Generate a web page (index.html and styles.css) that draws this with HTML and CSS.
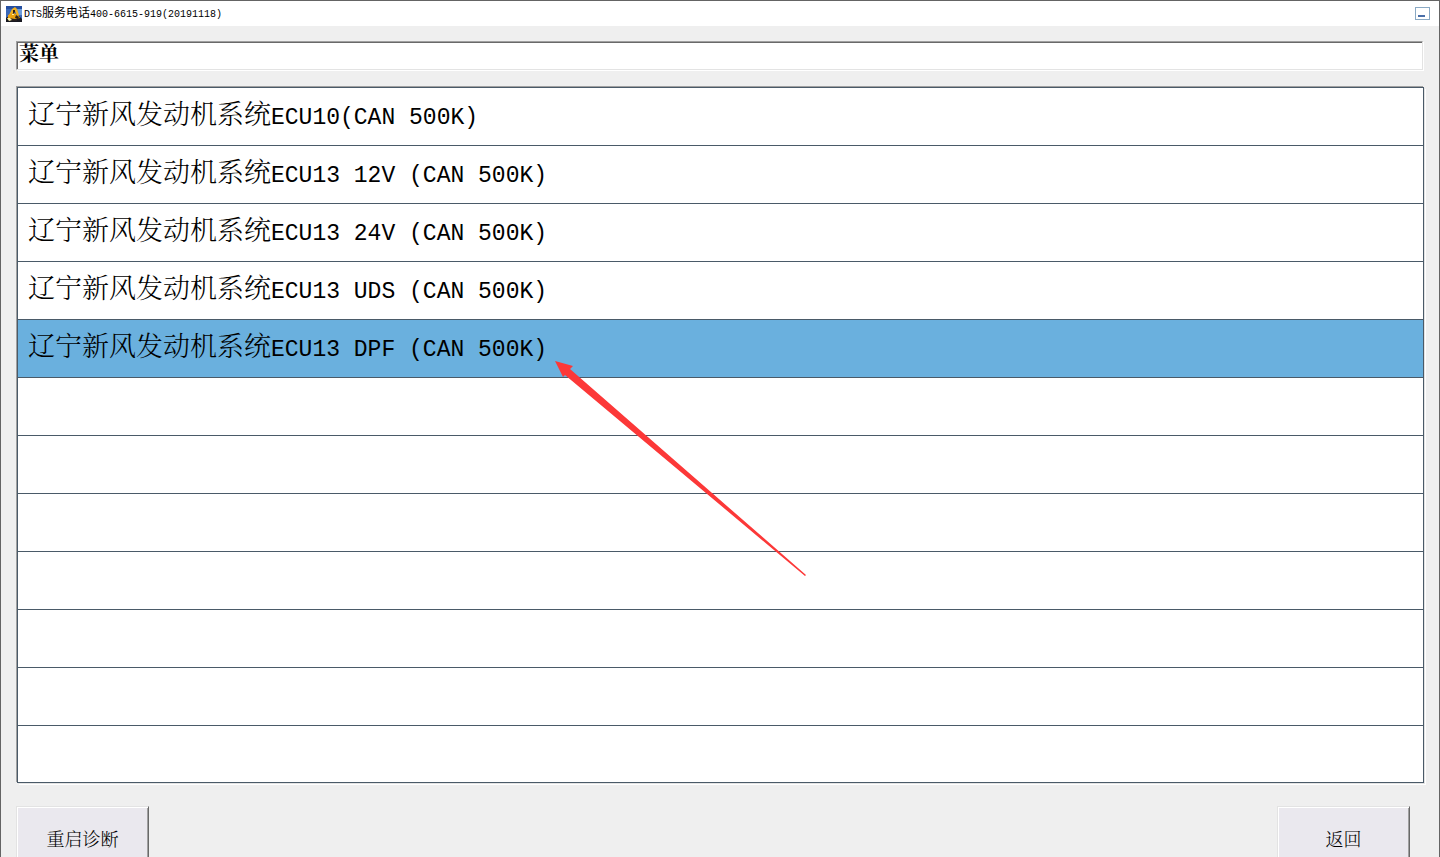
FILE: index.html
```html
<!DOCTYPE html>
<html lang="zh-CN">
<head>
<meta charset="utf-8">
<title>DTS服务电话400-6615-919(20191118)</title>
<link rel="stylesheet" href="styles.css">
</head>
<body>
<div class="window">
  <header class="titlebar">
    <svg class="app-icon" viewBox="0 0 16 16" aria-hidden="true">
      <rect width="16" height="16" fill="#3a68b8"/>
      <path d="M0 0h16v3H0z" fill="#244ea0"/>
      <path d="M11 3h5v6h-4z" fill="#6c9cdc"/>
      <path d="M0 12l3-2h10l3 3v3H0z" fill="#181820"/>
      <path d="M6 3l3-2 2 2 2 6-2 1-2-5-3 3-2 3-2 0 2-4z" fill="#f0b020"/>
      <path d="M2 9l6-2 4 2 2 3-5 1-7-1z" fill="#e8a010"/>
      <path d="M7 4l2 0 0 2-2 2zM10 9l3 2-1 2-3-1z" fill="#302010"/>
      <path d="M1 12h3l2 2-3 1zM6 8h2v1H6z" fill="#fff0a0"/>
      <path d="M6 13h5v2H6z" fill="#282020"/>
    </svg>
    <span class="title"><span class="latin">DTS</span>服务电话<span class="latin">400-6615-919(20191118)</span></span>
    <button class="minimize" type="button" aria-label="最小化"></button>
  </header>
  <main class="content">
    <h1 class="path">菜单</h1>
    <ul class="menu">
      <li><button class="row" type="button">辽宁新风发动机系统<span class="latin">ECU10(CAN 500K)</span></button></li>
      <li><button class="row" type="button">辽宁新风发动机系统<span class="latin">ECU13 12V (CAN 500K)</span></button></li>
      <li><button class="row" type="button">辽宁新风发动机系统<span class="latin">ECU13 24V (CAN 500K)</span></button></li>
      <li><button class="row" type="button">辽宁新风发动机系统<span class="latin">ECU13 UDS (CAN 500K)</span></button></li>
      <li class="selected"><button class="row" type="button" aria-current="true">辽宁新风发动机系统<span class="latin">ECU13 DPF (CAN 500K)</span></button>
        <svg class="arrow" viewBox="0 0 252 216" aria-hidden="true"><path d="M0 0L18 5L15 8L251 214L250 215L10 14L8 16Z" fill="#fc3838"/></svg>
      </li>
      <li></li>
      <li></li>
      <li></li>
      <li></li>
      <li></li>
      <li></li>
      <li></li>
    </ul>
    <footer class="actions">
      <button class="action" type="button">重启诊断</button>
      <button class="action" type="button">返回</button>
    </footer>
  </main>
</div>
</body>
</html>
```
FILE: styles.css
```css
* { box-sizing: border-box; }

body {
  margin: 0;
  height: 100vh;
  overflow: hidden;
  background: #efefef;
  color: #000;
  font-family: "Noto Serif CJK SC", "Noto Sans CJK SC", sans-serif;
}

button {
  font-family: inherit;
  color: inherit;
}

.latin { font-family: "Liberation Mono", monospace; }

.window {
  min-height: 100vh;
  border: 1px solid #646464;
  border-bottom: 0;
}

.titlebar {
  display: flex;
  align-items: center;
  gap: 2px;
  height: 25px;
  padding: 0 9px 0 5px;
  background: #fff;
}

.app-icon {
  width: 16px;
  height: 16px;
}

.title {
  font-family: "Noto Sans CJK SC", sans-serif;
  font-size: 12px;
  line-height: 16px;
  white-space: nowrap;
}

.title .latin { font-size: 10px; }

.minimize {
  display: flex;
  align-items: flex-end;
  width: 15px;
  height: 13px;
  margin-left: auto;
  padding: 2px;
  border: 1px solid #8aa9c4;
  background: #fff;
}

.minimize::before {
  content: "";
  width: 7px;
  height: 2px;
  background: #4a6ea8;
}

.content { padding: 15px; }

.path {
  height: 29px;
  margin: 0 1px 17px 0;
  padding: 0 2px;
  border: 1px solid;
  border-color: #a0a0a0 #e3e3e3 #e3e3e3 #a0a0a0;
  box-shadow: inset 1px 1px #696969, 1px 1px #fff;
  background: #fff;
  font-size: 20px;
  font-weight: 700;
  line-height: 22px;
}

.menu {
  margin: 0 0 0 1px;
  padding: 0;
  list-style: none;
  border: 1px solid #4a5a68;
  box-shadow: -1px -1px #a0a0a0, 1px 1px #e3e3e3, 2px 2px #fff;
  background: #fff;
}

.menu li {
  position: relative;
  height: 58px;
  border-bottom: 1px solid #4a5a68;
}

.menu li:last-child {
  height: 56px;
  border-bottom: 0;
}

.menu .selected { background: #6ab0de; }

.row {
  display: block;
  width: 100%;
  height: 100%;
  padding: 0 10px 2px;
  border: 0;
  background: none;
  font-size: 27px;
  font-weight: 300;
  line-height: 40px;
  text-align: left;
  white-space: nowrap;
}

.row .latin { font-size: 23px; }

.arrow {
  position: absolute;
  z-index: 1;
  top: 41px;
  left: 537px;
  width: 252px;
  height: 216px;
  pointer-events: none;
}

.actions {
  display: flex;
  justify-content: space-between;
  margin-top: 23px;
  padding-right: 14px;
}

.action {
  width: 133px;
  height: 64px;
  padding: 0;
  border: 1px solid;
  border-color: #e3e3e3 #696969 #696969 #e3e3e3;
  box-shadow: inset 1px 1px #fff, inset -1px -1px #a0a0a0;
  background: #eae8ee;
  font-size: 18px;
  font-weight: 300;
}
```
